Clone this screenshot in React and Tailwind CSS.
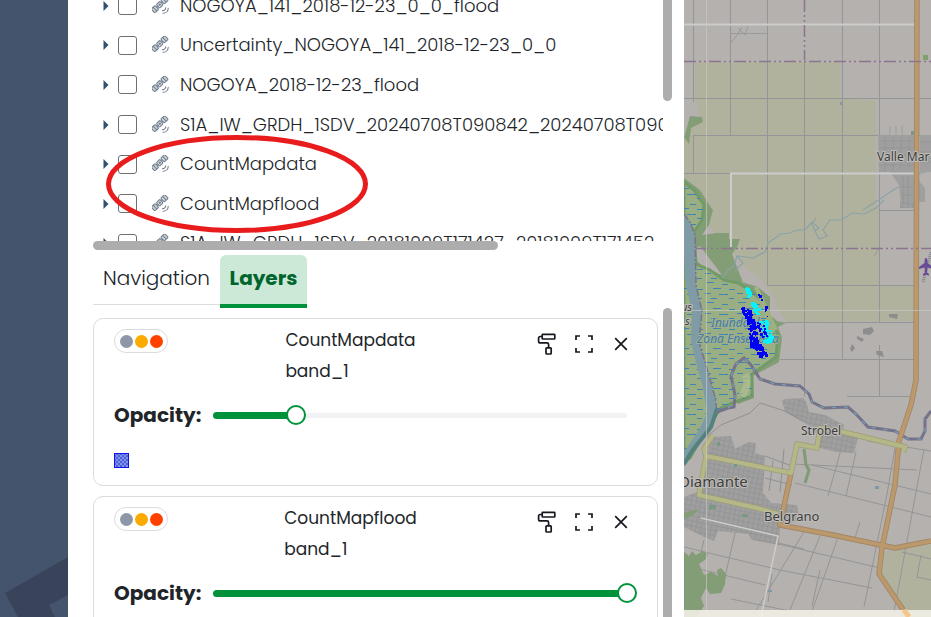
import { useState } from "react";

const LAYER_TREE = [
  "NOGOYA_141_2018-12-23_0_0_flood",
  "Uncertainty_NOGOYA_141_2018-12-23_0_0",
  "NOGOYA_2018-12-23_flood",
  "S1A_IW_GRDH_1SDV_20240708T090842_20240708T090",
  "CountMapdata",
  "CountMapflood",
  "S1A_IW_GRDH_1SDV_20181009T171427_20181009T171452",
];

function SatelliteIcon() {
  return (
    <svg viewBox="0 0 18 18" className="size-[18px] shrink-0" fill="none" stroke="#75808f" strokeWidth="1.1" aria-hidden="true">
      <g transform="rotate(-43 8 8)">
        <rect x="-1.200" y="5" width="5.400" height="5.200" rx="1.200" fill="#cfd6de" />
        <rect x="5.600" y="5.200" width="4.800" height="4.800" rx="1" fill="#e4e8ec" />
        <rect x="11.800" y="5" width="5.400" height="5.200" rx="1.200" fill="#cfd6de" />
        <path d="M4.200 7.600h1.400M10.400 7.600h1.400M1.500 5v5.200M14.500 5v5.200" />
        <circle cx="8" cy="7.600" r="0.700" />
      </g>
      <path d="M10.500 13.600c1.700.2 3.100-1.100 3.200-2.800M11 16.200c3 .1 5.100-2 5.200-4.800" strokeLinecap="round" />
    </svg>
  );
}

function RollerIcon() {
  return (
    <svg viewBox="0 0 20 22" className="h-[22px] w-5 shrink-0" fill="none" stroke="#16181d" strokeWidth="1.7" strokeLinejoin="round" aria-hidden="true">
      <rect x="5.200" y="1.400" width="12.600" height="4.600" rx="0.600" />
      <path d="M5.200 3.500H3.200Q1.600 3.500 1.600 5.200V8.200Q1.600 9.900 3.300 9.900H10Q11.600 9.900 11.600 11.400V14.600" />
      <rect x="9" y="14.800" width="5.200" height="6.200" rx="0.800" />
    </svg>
  );
}

function ExpandIcon() {
  return (
    <svg viewBox="0 0 20 20" className="size-5 shrink-0" fill="none" stroke="#16181d" strokeWidth="1.7" aria-hidden="true">
      <path d="M2 6V2H6M14 2H18V6M18 14V18H14M6 18H2V14" />
    </svg>
  );
}

function CloseIcon() {
  return (
    <svg viewBox="0 0 14 14" className="size-3.5 shrink-0" fill="none" stroke="#16181d" strokeWidth="1.7" aria-hidden="true">
      <path d="M1.200 1.200 12.800 12.800M12.800 1.200 1.200 12.800" />
    </svg>
  );
}

function TreeRow({ name }) {
  return (
    <li className="flex flex-1 items-center whitespace-nowrap">
      <button type="button" aria-label={"Expand " + name} className="flex w-[25px] shrink-0 pl-2.5">
        <svg viewBox="0 0 6 10" className="h-2.5 w-1.5" aria-hidden="true">
          <path d="M0.500 0 5.500 5 0.500 10Z" fill="#34506f" />
        </svg>
      </button>
      <label className="flex items-center">
        <input type="checkbox" className="size-[19px] shrink-0 appearance-none rounded-[3px] border border-[#6f6f6f] bg-white checked:bg-[#00923b]" />
        <span className="mr-2.5 ml-[15px] flex">
          <SatelliteIcon />
        </span>
        {name}
      </label>
    </li>
  );
}

function LayerCard({ name, initial, legend }) {
  const [opacity, setOpacity] = useState(initial);
  const id = "opacity-" + name;
  return (
    <section className="rounded-[10px] border border-[#dbdbe0] px-5 pb-[17px]">
      <header className="flex items-start pt-2.5">
        <button type="button" aria-label="Layer status" className="flex h-6 w-[54px] shrink-0 items-center justify-center gap-0.5 rounded-full border border-[#dbdbe0]">
          <span className="size-[13px] rounded-full bg-[#8e97a8]" />
          <span className="size-[13px] rounded-full bg-[#fbaa00]" />
          <span className="size-[13px] rounded-full bg-[#ff4100]" />
        </button>
        <div className="-mt-1 flex flex-1 justify-center text-[17px] leading-[31px] font-normal">
          <div>
            <h2>{name}</h2>
            <p>band_1</p>
          </div>
        </div>
        <div className="flex gap-[9px] pt-[3px] pr-0.5">
          <button type="button" aria-label="Style" className="flex h-6 w-7 items-center justify-center"><RollerIcon /></button>
          <button type="button" aria-label="Zoom to extent" className="flex h-6 w-7 items-center justify-center"><ExpandIcon /></button>
          <button type="button" aria-label="Remove" className="flex h-6 w-7 items-center justify-center"><CloseIcon /></button>
        </div>
      </header>
      <div className="mt-[13px] flex h-[30px] items-center">
        <label htmlFor={id} className="w-[89px] shrink-0 text-xl font-bold">Opacity:</label>
        <div className="relative flex h-5 flex-1 items-center px-2.5">
          <div className="flex h-[5px] flex-1 items-center rounded-full bg-[#f1f2f4]">
            <div className="h-[7px] rounded-full bg-[#00923b]" style={{ width: opacity + "%" }} />
          </div>
          <input
            id={id}
            type="range"
            min="0"
            max="100"
            value={opacity}
            onChange={(e) => setOpacity(Number(e.target.value))}
            className="absolute inset-0 m-0 h-5 w-full appearance-none bg-transparent [&::-webkit-slider-thumb]:size-5 [&::-webkit-slider-thumb]:appearance-none [&::-webkit-slider-thumb]:rounded-full [&::-webkit-slider-thumb]:border-2 [&::-webkit-slider-thumb]:border-[#00923b] [&::-webkit-slider-thumb]:bg-white"
          />
        </div>
      </div>
      <svg viewBox="0 0 15 15" className="mt-[23px] size-[15px]" role="img" aria-label={legend}>
        <defs>
          <pattern id={"hatch-" + name} width="4" height="4" patternUnits="userSpaceOnUse">
            <rect width="4" height="4" fill="#4b60d8" />
            <path d="M0 0h2v2h2v2H2V2H0Z" fill="#8293e8" />
          </pattern>
        </defs>
        <rect x="0.5" y="0.5" width="14" height="14" fill={"url(#hatch-" + name + ")"} stroke="#0e12f0" />
      </svg>
    </section>
  );
}

/* Deterministic scatter of small flood pixels along a slanted band. */
function scatter(count, x0, y0, x1, y1, spread, seed) {
  const out = [];
  let s = seed * 7919;
  const rnd = () => {
    s = (s * 16807) % 2147483647;
    return s / 2147483647;
  };
  for (let i = 0; i < count; i++) {
    const t = rnd();
    out.push([
      Math.round(x0 + (x1 - x0) * t + (rnd() - 0.5) * spread),
      Math.round(y0 + (y1 - y0) * t + (rnd() - 0.5) * 4),
      1 + Math.round(rnd() * 2),
    ]);
  }
  return out;
}

const FLOOD = [
  ["#00f6ff", scatter(16, 746, 288, 748, 294, 4, 41)],
  ["#00f6ff", scatter(26, 753, 302, 757, 312, 5, 77)],
  ["#00f6ff", scatter(60, 763, 319, 768, 341, 9, 97)],
  ["#0000fa", scatter(60, 744, 308, 750, 320, 7, 13)],
  ["#0000fa", scatter(120, 750, 319, 755, 347, 8, 29)],
  ["#0000fa", scatter(60, 753, 341, 763, 355, 9, 53)],
  ["#0000fa", scatter(26, 759, 322, 764, 336, 6, 65)],
  ["#0000fa", scatter(8, 758, 292, 767, 318, 3, 19)],
];

function MapView() {
  return (
    <svg viewBox="684 0 247 617" preserveAspectRatio="xMinYMin slice" className="block size-full" fontFamily="'Noto Sans', sans-serif" role="img" aria-label="Map">
      <defs>
        <pattern id="marsh" width="32" height="20" patternUnits="userSpaceOnUse">
          <path d="M2 2.500h8M18 4.500h6M9 8.500h8M25 9.500h6M1 13.500h6M15 14.500h9M7 18.500h6M25 18.500h5" stroke="#3f84b6" strokeWidth="1.200" />
        </pattern>
        <pattern id="streets" width="5" height="5" patternUnits="userSpaceOnUse" patternTransform="rotate(12)">
          <rect width="5" height="5" fill="#a09f9f" />
          <path d="M0 0.500h5M0.500 0v5" stroke="#929294" strokeWidth="0.700" />
        </pattern>
      </defs>
      <rect x="684" width="247" height="617" fill="#b5b1ae" />

      {/* farmland */}
      <path d="M695 62H840V98L876 101V205L879 210V285H914V321L788 322 760 285 730 250 704 220 684 200V136L700 118 695 96Z" fill="#b1b29d" />
      <path d="M879 249H914V285H879Z" fill="#b5b1ae" />
      <path d="M881 553 892 551 931 541V617H909L880 576Z" fill="#b1b29d" />

      {/* rural roads */}
      <g stroke="#949597" strokeWidth="1" fill="none">
        <path d="M693.500 0V102M693.500 136V173M730.500 0V135M767.500 0V285M804.500 62V396M842.500 0V359M879.500 0V322M879.500 345V396" />
        <path d="M684 98.500H931M693 135.500H931M684 173.500H730M767 285.500H916M785 322.500H918M780 359.500H916M847 396.500H916M879 210.500H916" />
        <path d="M730 33.500H767M731 43 737 35 742 27M738 28 745 35 748 26M874 256 879 249" strokeWidth="0.800" />
        <path d="M684 547 780 570 872 588M691 567 765 585M731 599 800 613M761 540 880 568M774 542 804 549M804 532 752 617M820 536 790 610M837 540 810 617M860 522 855 538M792 464 917 470M812 465 931 494M795 483 931 517M842 446 828 496M856 452 846 496M895 448 887 494 864 607M924 449 893 617M868 441 931 451M902 552 931 559M921 555 917 577 931 580M704 540 692 590M735 533 722 590M772 574 768 602M820 570 812 606" />
      </g>

      {/* woodland beside the river */}
      <path d="M684 138 690 116 702 117 703 122 691 128 689 144 684 137ZM684 178 700 190 708 203 713 210 709 225 702 235 717 233 729 233 729 239 740 239 737 247 732 254 742 280 757 286 766 290 771 296 770 315 777 321 786 323 778 327 782 338 779 362 753 376 754 398 738 404 684 300Z" fill="#839d77" />
      <path d="M688 252 700 246 722 275 704 268Z" fill="#b5b1ae" />
      <path d="M745 268 760 277 775 300 778 318 770 314 770 297 758 287 742 282Z" fill="#b5b1ae" />

      {/* marsh */}
      <path d="M684 182 694 190 704 205 702 220 694 232 696 264 710 270 724 280 738 283 751 291 762 300 769 315 778 335 776 357 752 374 752 396 735 402 721 408 706 430 690 458 684 462Z" fill="#9aae84" stroke="#729b68" strokeWidth="3" />
      <path d="M684 182 694 190 704 205 702 220 694 232 696 264 710 270 724 280 738 283 751 291 762 300 769 315 778 335 776 357 752 374 752 396 735 402 721 408 706 430 690 458 684 462Z" fill="url(#marsh)" />
      <path d="M756 287 769 315 776 330" stroke="#b6c18c" strokeWidth="4" fill="none" opacity="0.600" />
      <path d="M745 375Q750 383 742 396" stroke="#b1bf91" strokeWidth="7" fill="none" opacity="0.700" />

      {/* main river */}
      <path d="M684 214 690 222 695 235 696 285 702 311 699 342 706 365 715 397 717 412 711 426 696 446 684 464V452L697 433 707 414 703 387 697 366 691 342 692 311 686 285 684 260Z" fill="#7f9ca6" />
      <path d="M684 214 690 222 695 235 696 285 702 311 699 342 706 365 715 397 717 412 711 426 696 446 684 466" fill="none" stroke="#7e708b" strokeWidth="1.500" strokeDasharray="7 2 2 2" />
      <path d="M717 409 711 427 692 451 684 464" fill="none" stroke="#56827d" strokeWidth="4" />
      <path d="M717 412 728 408 734 407 735 395 731 376 736 364 744 358 751 365 760 379 775 384 800 386 809 394 812 402 824 408 848 407 856 414 868 427 895 431 908 439 921 439 925 431 925 419 931 411" fill="none" stroke="#747389" strokeWidth="3" />
      <path d="M728 408 735 402 735 395 731 376 736 364 744 358 751 365 760 379 775 384 800 386 809 394 812 402 824 408 848 407 856 414 868 427 895 431 908 439 921 439 925 431 925 419" fill="none" stroke="#76a1b8" strokeWidth="1.200" strokeDasharray="4 8" />

      {/* streams */}
      <path d="M884 200 876 208 864 214 852 213 842 220 830 220 823 230 827 236 819 239 815 231 819 228 812 222 805 230 797 230 790 233 781 234 768 243 765 252 753 258 737 256 734 266 728 270 722 278M737 256 743 263 735 271M815 231 812 224 816 218M863 210 880 199 893 190 907 183 918 174 931 170" fill="none" stroke="#8aa2a7" strokeWidth="1.200" />

      {/* built-up areas */}
      <path d="M878 135H916V172H879ZM890 172 916 172V203H901L899 185ZM920 135H931V172H920ZM918 180 925 188V202H917Z" fill="#a09f9f" />
      <path d="M879 141H915M879 148H915M880 155H914M879 165H914M885 135V171M893 137V170M901 137V170M909 137V170M903 176V202M908 176V202M901 187H916M901 195H916M920 142H931M920 152H931M920 162H931M890 126V135M896 126V135M902 125V135" stroke="#8f9092" strokeWidth="0.600" />
      <path d="M711 437 731 436 735 449 748 442 756 443 755 453 765 456 763 493 771 503 797 505 800 520 780 527 779 545 752 540 748 534 718 531 714 541 704 537 684 527V497L702 490 707 455Z" fill="url(#streets)" />
      <path d="M782 400 806 401 809 412 825 415 844 425 843 430 858 438 854 453 836 452 820 448 816 433 804 422 785 412ZM900 201H914V208H900ZM784 399 804 398 805 408 785 408Z" fill="url(#streets)" />
      <path d="M889 314 898 314 897 319 889 317ZM863 329 872 327 874 331 870 335 863 334ZM857 336 864 339 862 342 857 339ZM852 344 855 348 852 352 850 349ZM876 351 882 351 884 357 877 355Z" fill="#8e8d8d" />
      <path d="M705 438 721 425 750 413 760 403 785 411 804 422M765 456 792 466M773 461 769 491M784 449 780 492M765 478 792 485" fill="none" stroke="#8f9092" />
      <g stroke="#cccccb" fill="none">
        <path d="M684 24.500H915M731 247V173.500H916" strokeWidth="2" />
        <path d="M701 518 778 536 761 617" strokeWidth="1.500" />
      </g>

      {/* highways */}
      <g fill="none" strokeLinejoin="round">
        <g stroke="#a18765" strokeWidth="5.500">
          <path d="M917 0 916 380 911 405 899 441 895 485 882 548 879 574 908 617M791 473 780 525 833 535 895 548 931 541" />
        </g>
        <g stroke="#bc996d" strokeWidth="3.800">
          <path d="M917 0 916 380 911 405 899 441 895 485 882 548 879 574 908 617M791 473 780 525 833 535 895 548 931 541" />
        </g>
        <path d="M713 435 704 449 706 456 791 473 797 444 817 448 820 428 843 432 905 447 903 452M706 456 699 495 757 508 778 514" stroke="#9b9d78" strokeWidth="5.500" />
        <path d="M713 435 704 449 706 456 791 473 797 444 817 448 820 428 843 432 905 447 903 452M706 456 699 495 757 508 778 514" stroke="#b5b886" strokeWidth="4" />
      </g>

      {/* parks and groves */}
      <path d="M684 552 689 556 692 551 696 555 703 551 708 554 706 559 699 564 704 575 711 572 718 576 717 570 721 568 726 574 725 584 721 593 710 594 706 588 701 598 704 606 696 617H684ZM684 513 699 509 692 516 684 519Z" fill="#839d77" />
      <path d="M804 449 806 465 809 470 805 483" fill="none" stroke="#7f9b75" strokeWidth="3" />
      <path d="M717 442h3v4h-3ZM734 464h3v3h-3ZM709 505h7v4h-7ZM742 514h6v3h-6ZM911 131h3v4h-3Z" fill="#789a84" />
      <path d="M923 55h5v5h-5Z" fill="#82a06f" />
      <path d="M875 486h4v3h-4ZM768 590h4v2h-4ZM840 102h2v3h-2Z" fill="#8199a3" />

      {/* boundaries and tile seams */}
      <path d="M684 61.500H931M804.500 0V60M696 248.500H931" stroke="#8d7490" strokeWidth="1.500" strokeDasharray="12 3 2 3 2 3" />
      <path d="M706.500 0V617M684 310.500H931" stroke="#c7c9c4" strokeWidth="0.700" />

      {/* airport */}
      <path d="M923 282 931 252" stroke="#858390" strokeWidth="3" strokeDasharray="1 1" />
      <path d="M926 258c1.300 0 1.500 2 1.500 5l5.500 4v2l-5.500-1.500-.5 5 2 1.500v1.500l-3-.7-3 .7V274l2-1.500-.5-5-5.500 1.500v-2l5.500-4c0-3 .2-5 1.500-5Z" fill="#674d96" />

      {/* place names */}
      <g fill="#3d3d3d" stroke="#bfbdba" strokeWidth="2" paintOrder="stroke" strokeLinejoin="round">
        <text x="877" y="161" fontSize="12">Valle Mar</text>
        <text x="801" y="435" fontSize="12">Strobel</text>
        <text x="764" y="521" fontSize="13">Belgrano</text>
        <text x="679" y="487" fontSize="15">Diamante</text>
        <text x="681" y="311" fontSize="11" fontStyle="italic">us</text>
        <text x="685" y="325" fontSize="11" fontStyle="italic">s</text>
      </g>
      <g fill="#447aa3" stroke="#9fb396" strokeWidth="1.500" paintOrder="stroke" fontSize="12" fontStyle="italic">
        <text x="711" y="327">Inundable</text>
        <text x="697" y="343">Zona Ensenada</text>
      </g>

      {/* flood pixels */}
      {FLOOD.map(([color, cells], i) => (
        <g key={i} fill={color} shapeRendering="crispEdges">
          {cells.map(([x, y, s], j) => (
            <rect key={j} x={x} y={y} width={s} height={s} />
          ))}
        </g>
      ))}

      <rect x="684" y="610" width="247" height="7" fill="#f2f0e6" opacity="0.900" />
      <path d="M904 610 909 617" stroke="#f5c58c" strokeWidth="5" />
    </svg>
  );
}

export default function App() {
  return (
    <div className="flex h-screen overflow-hidden bg-white font-['Poppins','Inter',sans-serif] text-[#212529]">
      <aside className="flex w-[68px] shrink-0 flex-col justify-end bg-[#44546c]">
        <svg viewBox="0 0 68 60" className="w-full" aria-hidden="true">
          <path d="M5 36 68 0V38L49 48 55 60H18Z" fill="#39445a" />
        </svg>
      </aside>

      <main className="flex w-[616px] shrink-0 flex-col pl-[25px]">
        <div className="relative">
          <div className="flex h-[241px]">
            <div className="min-w-0 flex-1 overflow-hidden">
              <ul className="-mt-3.5 flex h-[277px] flex-col text-lg font-light">
                {LAYER_TREE.map((name) => (
                  <TreeRow key={name} name={name} />
                ))}
              </ul>
            </div>
            <div className="mr-3 h-[101px] w-[9px] rounded-b-full bg-[#adadad]" />
          </div>
          <div className="h-[9px] w-[405px] rounded-full bg-[#adadad]" />
          <svg viewBox="0 0 262 98" className="pointer-events-none absolute top-[135px] left-[13px] h-[98px] w-[262px]" aria-hidden="true">
            <ellipse cx="131" cy="49" rx="128.500" ry="46.500" fill="none" stroke="#e81c1c" strokeWidth="5" />
          </svg>
        </div>

        <nav className="mt-[5px] flex items-start text-xl" role="tablist">
          <button type="button" role="tab" aria-selected="false" className="h-[50px] w-[127px] border-b border-[#dbdbe0] pb-1 font-light">
            Navigation
          </button>
          <button type="button" role="tab" aria-selected="true" className="h-[53px] w-[87px] rounded-t-md border-b-4 border-[#00923b] bg-[#cce8d7] pb-1 font-bold text-[#00652c]">
            Layers
          </button>
        </nav>

        <div className="flex min-h-0 flex-1 overflow-hidden">
          <div className="mt-2.5 mr-[5px] flex min-w-0 flex-1 flex-col gap-2.5 font-light">
            <LayerCard name="CountMapdata" initial={20} legend="Data legend" />
            <LayerCard name="CountMapflood" initial={100} legend="Flood legend" />
          </div>
          <div className="mr-3 w-[9px] shrink-0 rounded-t-full bg-[#adadad]" />
        </div>
      </main>

      <div className="min-w-0 flex-1 overflow-hidden">
        <MapView />
      </div>
    </div>
  );
}
